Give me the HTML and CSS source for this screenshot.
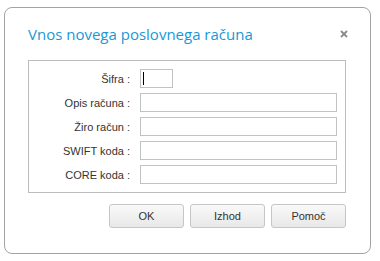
FILE: index.html
```html
<!DOCTYPE html>
<html lang="sl">
<head>
    <meta charset="UTF-8">
    <title>Vnos novega poslovnega računa</title>
    <link rel="stylesheet" href="styles.css">
</head>
<body>
    <div class="dialog">
        <div class="dialog-header">
            <h1>Vnos novega poslovnega računa</h1>
            <button class="close-btn" title="Zapri">
                <svg width="8" height="8" viewBox="0 0 8 8">
                    <path d="M1 1 L7 7 M7 1 L1 7" stroke="#8a8a8a" stroke-width="1.8"/>
                </svg>
            </button>
        </div>

        <div class="form-box">
            <div class="form-row">
                <label for="sifra">Šifra :</label>
                <span class="input-wrap">
                    <input type="text" id="sifra" class="short">
                    <span class="caret"></span>
                </span>
            </div>
            <div class="form-row">
                <label for="opis">Opis računa :</label>
                <input type="text" id="opis">
            </div>
            <div class="form-row">
                <label for="ziro">Žiro račun :</label>
                <input type="text" id="ziro">
            </div>
            <div class="form-row">
                <label for="swift">SWIFT koda :</label>
                <input type="text" id="swift">
            </div>
            <div class="form-row">
                <label for="core">CORE koda :</label>
                <input type="text" id="core">
            </div>
        </div>

        <div class="button-row">
            <button class="btn">OK</button>
            <button class="btn">Izhod</button>
            <button class="btn">Pomoč</button>
        </div>
    </div>
</body>
</html>
```

FILE: styles.css
```css
body {
    margin: 0;
    background-color: #fff;
    font-family: "Liberation Sans", Arial, sans-serif;
    font-size: 11px;
    color: #333;
}

.dialog {
    box-sizing: border-box;
    width: 367px;
    height: 247px;
    margin: 7px 0 0 4px;
    border: 1px solid #a3a3a3;
    border-radius: 8px;
    background-color: #fff;
}

.dialog-header {
    display: flex;
    align-items: center;
    justify-content: space-between;
    padding: 15px 22px 0 23px;
    height: 22px;
}

h1 {
    margin: 0;
    font-family: "Open Sans", sans-serif;
    font-size: 15px;
    font-weight: normal;
    color: #1a98d5;
    line-height: 22px;
}

.close-btn {
    border: none;
    background: none;
    padding: 0;
    width: 8px;
    height: 8px;
    display: flex;
    cursor: pointer;
}

.form-box {
    box-sizing: border-box;
    width: 318px;
    height: 133px;
    margin: 15px 0 0 23px;
    border: 1px solid #bdbdbd;
    padding: 8px 0 0 0;
    display: flex;
    flex-direction: column;
    gap: 5px;
}

.form-row {
    display: flex;
    align-items: center;
    gap: 10px;
}

.form-row label {
    width: 101px;
    text-align: right;
    color: #333;
}

.form-row input {
    box-sizing: border-box;
    width: 197px;
    height: 19px;
    border: 1px solid #c2c2c2;
    padding: 0 2px;
    font-family: inherit;
    font-size: 11px;
    outline: none;
}

.form-row input.short {
    width: 33px;
    display: block;
}

.input-wrap {
    position: relative;
    display: block;
}

.caret {
    position: absolute;
    left: 3px;
    top: 3px;
    width: 1px;
    height: 13px;
    background-color: #000;
}

.button-row {
    display: flex;
    justify-content: flex-end;
    gap: 6px;
    margin: 11px 24px 0 0;
}

.btn {
    width: 75px;
    height: 24px;
    border: 1px solid #c6c6c6;
    border-radius: 3px;
    background: linear-gradient(#f9f9f9, #e8e8e8);
    font-family: inherit;
    font-size: 11px;
    font-weight: normal;
    color: #333;
    cursor: pointer;
}
```
